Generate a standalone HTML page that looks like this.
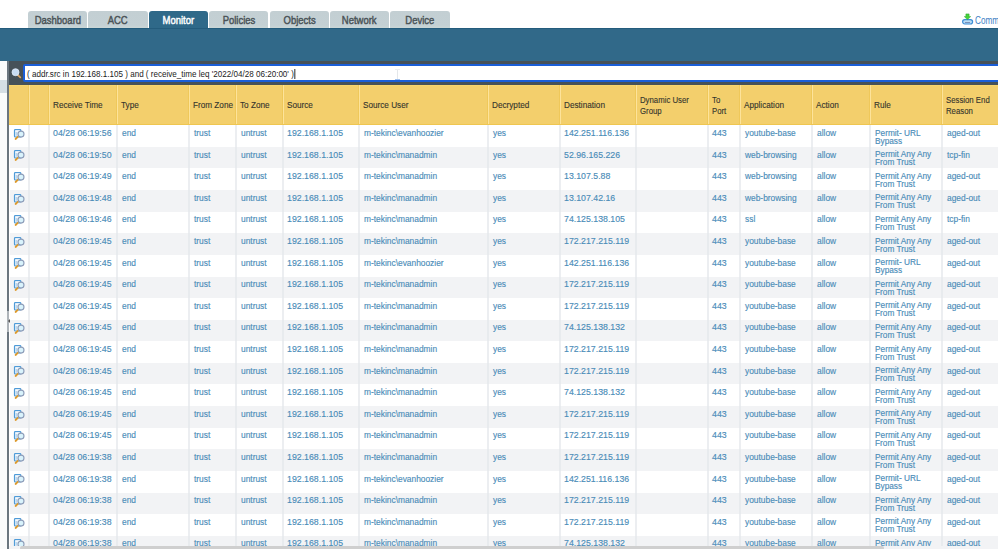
<!DOCTYPE html>
<html><head><meta charset="utf-8"><style>
*{box-sizing:border-box}
html,body{margin:0;padding:0}
body{width:998px;height:549px;overflow:hidden;position:relative;background:#fff;font-family:"Liberation Sans",sans-serif}
.tab{position:absolute;top:11px;height:17px;width:59.2px;background:linear-gradient(#c3cfd3 0%,#c4d0d4 82%,#cad6d6 100%);border-radius:3px 3px 0 0;color:#4a5357;font-weight:normal;-webkit-text-stroke:0.45px #4a5357;font-size:11px;line-height:19px;text-align:center;letter-spacing:0}
.tab span{display:inline-block;transform:scaleX(0.86);transform-origin:center}
.tab.on{background:#2f6989 !important;color:#fff;-webkit-text-stroke:0.45px #fff}
#band{position:absolute;left:0;top:28px;width:998px;height:33px;background:#316989;border-top:1px solid #245c7c}
#lp{position:absolute;left:0;top:61px;width:7px;height:488px;background:#fafbfb}
#lpsel{position:absolute;left:0;top:80px;width:7px;height:13px;background:#d5dee4}
#frame{position:absolute;left:7px;top:61px;width:991px;height:488px;background:#465158}
#lb{position:absolute;left:7px;top:61px;width:2px;height:488px;background:#6b767f}
#search{position:absolute;left:23px;top:64px;width:980px;height:18px;border:2px solid #1a5ed8;border-radius:2px;background:#fff;}
#stext{position:absolute;left:26.5px;top:67.5px;font-size:9.6px;line-height:12px;color:#222;white-space:nowrap;transform:scaleX(0.841);transform-origin:left top}
#tbl{position:absolute;left:9px;top:84.5px;width:989px;height:461.5px;background:#fff;overflow:hidden}
.hd{position:absolute;top:0;height:40.8px;background:#f3cf6c}
.hdl{position:absolute;top:0;height:40.8px;width:1px;background:#fde39a}
.hdd{position:absolute;top:0;height:40.8px;width:1px;background:#efc85a}
.ht{position:absolute;font-size:8.8px;color:#35352c;-webkit-text-stroke:0.12px #35352c;line-height:10.4px;white-space:nowrap;transform-origin:left top}
.row{position:absolute;left:1px;width:988px;height:21.6px}
.alt{background:#f2f3f5}
.vl{position:absolute;top:40.8px;height:430px;width:2px;background:#e4e7eb;opacity:0.7}
.t{position:absolute;font-size:9.8px;color:#4a8cb8;-webkit-text-stroke:0.15px #4a8cb8;line-height:8px;white-space:nowrap;transform:scaleX(0.855);transform-origin:left top}
.rt{position:absolute;font-size:9px;color:#4a8cb8;-webkit-text-stroke:0.15px #4a8cb8;line-height:8px;white-space:nowrap;transform:scaleX(0.92);transform-origin:left top}
.ic{position:absolute;left:4px;width:14px;height:14px}
#sb{position:absolute;left:20px;top:546px;width:864px;height:4px;background:#cfcfcf;border-radius:2px}
#commit{position:absolute;left:975px;top:14px;font-size:10.5px;line-height:12px;color:#3d80c4;white-space:nowrap;transform:scaleX(0.78);transform-origin:left top}
</style></head><body>

<div class="tab" style="left:28.0px"><span>Dashboard</span></div>
<div class="tab" style="left:88.4px"><span>ACC</span></div>
<div class="tab on" style="left:148.8px"><span>Monitor</span></div>
<div class="tab" style="left:209.2px"><span>Policies</span></div>
<div class="tab" style="left:269.6px"><span>Objects</span></div>
<div class="tab" style="left:330.0px"><span>Network</span></div>
<div class="tab" style="left:390.4px"><span>Device</span></div>
<svg style="position:absolute;left:961px;top:13px" width="13" height="13" viewBox="0 0 13 13"><rect x="1.6" y="6.6" width="10" height="4.4" rx="2.2" fill="#b9dcf4" stroke="#3d8ed6" stroke-width="1.2"/><rect x="4" y="9" width="5" height="1" fill="#7a90b8"/><path d="M4.9 0.9h3.2v2.7h1.6L6.5 6.6 3.3 3.6h1.6z" fill="#45d43a" stroke="#2aa02a" stroke-width="0.5"/></svg><div id="commit">Comm</div>
<div id="band"></div><div id="frame"></div><div id="lp"></div><div id="lpsel"></div><div id="lb"></div>
<svg style="position:absolute;left:10px;top:67px" width="12" height="12" viewBox="0 0 12 12"><line x1="7.6" y1="7.8" x2="10.3" y2="10.3" stroke="#dba463" stroke-width="1.7" stroke-linecap="round"/><circle cx="5.5" cy="5.2" r="3.5" fill="#c8dcf2" stroke="#e2eefa" stroke-width="0.8"/></svg>
<div id="search"></div><div id="stext">( addr.src in 192.168.1.105 ) and ( receive_time leq '2022/04/28 06:20:00' )<span style="display:inline-block;width:1px;height:10px;background:#000;vertical-align:-2px;margin-left:1px"></span></div>
<div style="position:absolute;left:397px;top:69px;width:1px;height:10px;background:#e4e7ea"></div><div style="position:absolute;left:395px;top:69px;width:5px;height:1px;background:#eceef0"></div><div style="position:absolute;left:395px;top:79px;width:5px;height:1px;background:#9fc0ee"></div>
<div id="tbl">
<div class="hd" style="left:0;width:989px"></div><div style="position:absolute;left:0;top:0;width:989px;height:1px;background:#f9d56c"></div>
<div class="hdd" style="left:19.0px"></div><div class="hdl" style="left:20.0px"></div>
<div class="hdd" style="left:39.0px"></div><div class="hdl" style="left:40.0px"></div>
<div class="hdd" style="left:107.0px"></div><div class="hdl" style="left:108.0px"></div>
<div class="hdd" style="left:179.0px"></div><div class="hdl" style="left:180.0px"></div>
<div class="hdd" style="left:226.0px"></div><div class="hdl" style="left:227.0px"></div>
<div class="hdd" style="left:273.0px"></div><div class="hdl" style="left:274.0px"></div>
<div class="hdd" style="left:349.0px"></div><div class="hdl" style="left:350.0px"></div>
<div class="hdd" style="left:478.0px"></div><div class="hdl" style="left:479.0px"></div>
<div class="hdd" style="left:550.0px"></div><div class="hdl" style="left:551.0px"></div>
<div class="hdd" style="left:626.0px"></div><div class="hdl" style="left:627.0px"></div>
<div class="hdd" style="left:698.0px"></div><div class="hdl" style="left:699.0px"></div>
<div class="hdd" style="left:730.0px"></div><div class="hdl" style="left:731.0px"></div>
<div class="hdd" style="left:802.0px"></div><div class="hdl" style="left:803.0px"></div>
<div class="hdd" style="left:860.0px"></div><div class="hdl" style="left:861.0px"></div>
<div class="hdd" style="left:932.0px"></div><div class="hdl" style="left:933.0px"></div>
<div style="position:absolute;left:0;top:39.8px;width:989px;height:1px;background:#efc650"></div>
<div class="row" style="top:40.80px"></div>
<div class="row alt" style="top:62.40px"></div>
<div class="row" style="top:84.00px"></div>
<div class="row alt" style="top:105.60px"></div>
<div class="row" style="top:127.20px"></div>
<div class="row alt" style="top:148.80px"></div>
<div class="row" style="top:170.40px"></div>
<div class="row alt" style="top:192.00px"></div>
<div class="row" style="top:213.60px"></div>
<div class="row alt" style="top:235.20px"></div>
<div class="row" style="top:256.80px"></div>
<div class="row alt" style="top:278.40px"></div>
<div class="row" style="top:300.00px"></div>
<div class="row alt" style="top:321.60px"></div>
<div class="row" style="top:343.20px"></div>
<div class="row alt" style="top:364.80px"></div>
<div class="row" style="top:386.40px"></div>
<div class="row alt" style="top:408.00px"></div>
<div class="row" style="top:429.60px"></div>
<div class="row alt" style="top:451.20px"></div>
<div class="vl" style="left:19.0px"></div>
<div class="vl" style="left:39.0px"></div>
<div class="vl" style="left:107.0px"></div>
<div class="vl" style="left:179.0px"></div>
<div class="vl" style="left:226.0px"></div>
<div class="vl" style="left:273.0px"></div>
<div class="vl" style="left:349.0px"></div>
<div class="vl" style="left:478.0px"></div>
<div class="vl" style="left:550.0px"></div>
<div class="vl" style="left:626.0px"></div>
<div class="vl" style="left:698.0px"></div>
<div class="vl" style="left:730.0px"></div>
<div class="vl" style="left:802.0px"></div>
<div class="vl" style="left:860.0px"></div>
<div class="vl" style="left:932.0px"></div>
<div class="ht" style="left:44.4px;top:15.7px;transform:scaleX(0.93)">Receive Time</div>
<div class="ht" style="left:112.4px;top:15.7px;transform:scaleX(0.93)">Type</div>
<div class="ht" style="left:184.4px;top:15.7px;transform:scaleX(0.93)">From Zone</div>
<div class="ht" style="left:231.4px;top:15.7px;transform:scaleX(0.93)">To Zone</div>
<div class="ht" style="left:278.4px;top:15.7px;transform:scaleX(0.93)">Source</div>
<div class="ht" style="left:354.4px;top:15.7px;transform:scaleX(0.93)">Source User</div>
<div class="ht" style="left:483.4px;top:15.7px;transform:scaleX(0.93)">Decrypted</div>
<div class="ht" style="left:555.4px;top:15.7px;transform:scaleX(0.93)">Destination</div>
<div class="ht" style="left:630.6px;top:10.6px;transform:scaleX(0.885)">Dynamic User<br>Group</div>
<div class="ht" style="left:702.6px;top:10.6px;transform:scaleX(0.885)">To<br>Port</div>
<div class="ht" style="left:735.4px;top:15.7px;transform:scaleX(0.93)">Application</div>
<div class="ht" style="left:807.4px;top:15.7px;transform:scaleX(0.93)">Action</div>
<div class="ht" style="left:865.4px;top:15.7px;transform:scaleX(0.93)">Rule</div>
<div class="ht" style="left:936.6px;top:10.6px;transform:scaleX(0.885)">Session End<br>Reason</div>
<svg class="ic" style="top:43.3px" width="14" height="14" viewBox="0 0 14 14"><rect x="1.5" y="1.6" width="6.3" height="7.4" rx="0.8" fill="#e6f1fa" stroke="#4f9bd8" stroke-width="1.2"/><line x1="2.4" y1="3" x2="7" y2="3" stroke="#fff" stroke-width="1"/><line x1="3.3" y1="4" x2="3.3" y2="7.6" stroke="#a9cdea" stroke-width="0.9"/><line x1="5" y1="8.7" x2="2.6" y2="11" stroke="#dd9a2c" stroke-width="1.8" stroke-linecap="round"/><circle cx="8" cy="6.1" r="3" fill="#d9f3fc" stroke="#8c9cb8" stroke-width="1.1"/></svg>
<div class="t" style="left:44.4px;top:44.4px;transform:scaleX(0.895)">04/28 06:19:56</div>
<div class="t" style="left:112.4px;top:44.4px;margin-left:0.9px">end</div>
<div class="t" style="left:184.4px;top:44.4px;margin-left:0.9px">trust</div>
<div class="t" style="left:231.4px;top:44.4px;margin-left:0.9px">untrust</div>
<div class="t" style="left:278.4px;top:44.4px;transform:scaleX(0.895)">192.168.1.105</div>
<div class="t" style="left:354.4px;top:44.4px;margin-left:0.9px">m-tekinc\evanhoozier</div>
<div class="t" style="left:483.4px;top:44.4px;margin-left:0.9px">yes</div>
<div class="t" style="left:555.4px;top:44.4px;transform:scaleX(0.895)">142.251.116.136</div>
<div class="t" style="left:703.4px;top:44.4px;transform:scaleX(0.895)">443</div>
<div class="t" style="left:735.4px;top:44.4px;margin-left:0.9px">youtube-base</div>
<div class="t" style="left:807.4px;top:44.4px;margin-left:0.9px">allow</div>
<div class="rt" style="left:865.4px;top:44.1px;margin-left:0.6px">Permit- URL<br>Bypass</div>
<div class="t" style="left:937.4px;top:44.4px;margin-left:0.9px">aged-out</div>
<svg class="ic" style="top:64.9px" width="14" height="14" viewBox="0 0 14 14"><rect x="1.5" y="1.6" width="6.3" height="7.4" rx="0.8" fill="#e6f1fa" stroke="#4f9bd8" stroke-width="1.2"/><line x1="2.4" y1="3" x2="7" y2="3" stroke="#fff" stroke-width="1"/><line x1="3.3" y1="4" x2="3.3" y2="7.6" stroke="#a9cdea" stroke-width="0.9"/><line x1="5" y1="8.7" x2="2.6" y2="11" stroke="#dd9a2c" stroke-width="1.8" stroke-linecap="round"/><circle cx="8" cy="6.1" r="3" fill="#d9f3fc" stroke="#8c9cb8" stroke-width="1.1"/></svg>
<div class="t" style="left:44.4px;top:66.0px;transform:scaleX(0.895)">04/28 06:19:50</div>
<div class="t" style="left:112.4px;top:66.0px;margin-left:0.9px">end</div>
<div class="t" style="left:184.4px;top:66.0px;margin-left:0.9px">trust</div>
<div class="t" style="left:231.4px;top:66.0px;margin-left:0.9px">untrust</div>
<div class="t" style="left:278.4px;top:66.0px;transform:scaleX(0.895)">192.168.1.105</div>
<div class="t" style="left:354.4px;top:66.0px;margin-left:0.9px">m-tekinc\manadmin</div>
<div class="t" style="left:483.4px;top:66.0px;margin-left:0.9px">yes</div>
<div class="t" style="left:555.4px;top:66.0px;transform:scaleX(0.895)">52.96.165.226</div>
<div class="t" style="left:703.4px;top:66.0px;transform:scaleX(0.895)">443</div>
<div class="t" style="left:735.4px;top:66.0px;margin-left:0.9px">web-browsing</div>
<div class="t" style="left:807.4px;top:66.0px;margin-left:0.9px">allow</div>
<div class="rt" style="left:865.4px;top:65.7px;margin-left:0.6px">Permit Any Any<br>From Trust</div>
<div class="t" style="left:937.4px;top:66.0px;margin-left:0.9px">tcp-fin</div>
<svg class="ic" style="top:86.5px" width="14" height="14" viewBox="0 0 14 14"><rect x="1.5" y="1.6" width="6.3" height="7.4" rx="0.8" fill="#e6f1fa" stroke="#4f9bd8" stroke-width="1.2"/><line x1="2.4" y1="3" x2="7" y2="3" stroke="#fff" stroke-width="1"/><line x1="3.3" y1="4" x2="3.3" y2="7.6" stroke="#a9cdea" stroke-width="0.9"/><line x1="5" y1="8.7" x2="2.6" y2="11" stroke="#dd9a2c" stroke-width="1.8" stroke-linecap="round"/><circle cx="8" cy="6.1" r="3" fill="#d9f3fc" stroke="#8c9cb8" stroke-width="1.1"/></svg>
<div class="t" style="left:44.4px;top:87.6px;transform:scaleX(0.895)">04/28 06:19:49</div>
<div class="t" style="left:112.4px;top:87.6px;margin-left:0.9px">end</div>
<div class="t" style="left:184.4px;top:87.6px;margin-left:0.9px">trust</div>
<div class="t" style="left:231.4px;top:87.6px;margin-left:0.9px">untrust</div>
<div class="t" style="left:278.4px;top:87.6px;transform:scaleX(0.895)">192.168.1.105</div>
<div class="t" style="left:354.4px;top:87.6px;margin-left:0.9px">m-tekinc\manadmin</div>
<div class="t" style="left:483.4px;top:87.6px;margin-left:0.9px">yes</div>
<div class="t" style="left:555.4px;top:87.6px;transform:scaleX(0.895)">13.107.5.88</div>
<div class="t" style="left:703.4px;top:87.6px;transform:scaleX(0.895)">443</div>
<div class="t" style="left:735.4px;top:87.6px;margin-left:0.9px">web-browsing</div>
<div class="t" style="left:807.4px;top:87.6px;margin-left:0.9px">allow</div>
<div class="rt" style="left:865.4px;top:87.3px;margin-left:0.6px">Permit Any Any<br>From Trust</div>
<div class="t" style="left:937.4px;top:87.6px;margin-left:0.9px">aged-out</div>
<svg class="ic" style="top:108.1px" width="14" height="14" viewBox="0 0 14 14"><rect x="1.5" y="1.6" width="6.3" height="7.4" rx="0.8" fill="#e6f1fa" stroke="#4f9bd8" stroke-width="1.2"/><line x1="2.4" y1="3" x2="7" y2="3" stroke="#fff" stroke-width="1"/><line x1="3.3" y1="4" x2="3.3" y2="7.6" stroke="#a9cdea" stroke-width="0.9"/><line x1="5" y1="8.7" x2="2.6" y2="11" stroke="#dd9a2c" stroke-width="1.8" stroke-linecap="round"/><circle cx="8" cy="6.1" r="3" fill="#d9f3fc" stroke="#8c9cb8" stroke-width="1.1"/></svg>
<div class="t" style="left:44.4px;top:109.2px;transform:scaleX(0.895)">04/28 06:19:48</div>
<div class="t" style="left:112.4px;top:109.2px;margin-left:0.9px">end</div>
<div class="t" style="left:184.4px;top:109.2px;margin-left:0.9px">trust</div>
<div class="t" style="left:231.4px;top:109.2px;margin-left:0.9px">untrust</div>
<div class="t" style="left:278.4px;top:109.2px;transform:scaleX(0.895)">192.168.1.105</div>
<div class="t" style="left:354.4px;top:109.2px;margin-left:0.9px">m-tekinc\manadmin</div>
<div class="t" style="left:483.4px;top:109.2px;margin-left:0.9px">yes</div>
<div class="t" style="left:555.4px;top:109.2px;transform:scaleX(0.895)">13.107.42.16</div>
<div class="t" style="left:703.4px;top:109.2px;transform:scaleX(0.895)">443</div>
<div class="t" style="left:735.4px;top:109.2px;margin-left:0.9px">web-browsing</div>
<div class="t" style="left:807.4px;top:109.2px;margin-left:0.9px">allow</div>
<div class="rt" style="left:865.4px;top:108.9px;margin-left:0.6px">Permit Any Any<br>From Trust</div>
<div class="t" style="left:937.4px;top:109.2px;margin-left:0.9px">aged-out</div>
<svg class="ic" style="top:129.7px" width="14" height="14" viewBox="0 0 14 14"><rect x="1.5" y="1.6" width="6.3" height="7.4" rx="0.8" fill="#e6f1fa" stroke="#4f9bd8" stroke-width="1.2"/><line x1="2.4" y1="3" x2="7" y2="3" stroke="#fff" stroke-width="1"/><line x1="3.3" y1="4" x2="3.3" y2="7.6" stroke="#a9cdea" stroke-width="0.9"/><line x1="5" y1="8.7" x2="2.6" y2="11" stroke="#dd9a2c" stroke-width="1.8" stroke-linecap="round"/><circle cx="8" cy="6.1" r="3" fill="#d9f3fc" stroke="#8c9cb8" stroke-width="1.1"/></svg>
<div class="t" style="left:44.4px;top:130.8px;transform:scaleX(0.895)">04/28 06:19:46</div>
<div class="t" style="left:112.4px;top:130.8px;margin-left:0.9px">end</div>
<div class="t" style="left:184.4px;top:130.8px;margin-left:0.9px">trust</div>
<div class="t" style="left:231.4px;top:130.8px;margin-left:0.9px">untrust</div>
<div class="t" style="left:278.4px;top:130.8px;transform:scaleX(0.895)">192.168.1.105</div>
<div class="t" style="left:354.4px;top:130.8px;margin-left:0.9px">m-tekinc\manadmin</div>
<div class="t" style="left:483.4px;top:130.8px;margin-left:0.9px">yes</div>
<div class="t" style="left:555.4px;top:130.8px;transform:scaleX(0.895)">74.125.138.105</div>
<div class="t" style="left:703.4px;top:130.8px;transform:scaleX(0.895)">443</div>
<div class="t" style="left:735.4px;top:130.8px;margin-left:0.9px">ssl</div>
<div class="t" style="left:807.4px;top:130.8px;margin-left:0.9px">allow</div>
<div class="rt" style="left:865.4px;top:130.5px;margin-left:0.6px">Permit Any Any<br>From Trust</div>
<div class="t" style="left:937.4px;top:130.8px;margin-left:0.9px">tcp-fin</div>
<svg class="ic" style="top:151.3px" width="14" height="14" viewBox="0 0 14 14"><rect x="1.5" y="1.6" width="6.3" height="7.4" rx="0.8" fill="#e6f1fa" stroke="#4f9bd8" stroke-width="1.2"/><line x1="2.4" y1="3" x2="7" y2="3" stroke="#fff" stroke-width="1"/><line x1="3.3" y1="4" x2="3.3" y2="7.6" stroke="#a9cdea" stroke-width="0.9"/><line x1="5" y1="8.7" x2="2.6" y2="11" stroke="#dd9a2c" stroke-width="1.8" stroke-linecap="round"/><circle cx="8" cy="6.1" r="3" fill="#d9f3fc" stroke="#8c9cb8" stroke-width="1.1"/></svg>
<div class="t" style="left:44.4px;top:152.4px;transform:scaleX(0.895)">04/28 06:19:45</div>
<div class="t" style="left:112.4px;top:152.4px;margin-left:0.9px">end</div>
<div class="t" style="left:184.4px;top:152.4px;margin-left:0.9px">trust</div>
<div class="t" style="left:231.4px;top:152.4px;margin-left:0.9px">untrust</div>
<div class="t" style="left:278.4px;top:152.4px;transform:scaleX(0.895)">192.168.1.105</div>
<div class="t" style="left:354.4px;top:152.4px;margin-left:0.9px">m-tekinc\manadmin</div>
<div class="t" style="left:483.4px;top:152.4px;margin-left:0.9px">yes</div>
<div class="t" style="left:555.4px;top:152.4px;transform:scaleX(0.895)">172.217.215.119</div>
<div class="t" style="left:703.4px;top:152.4px;transform:scaleX(0.895)">443</div>
<div class="t" style="left:735.4px;top:152.4px;margin-left:0.9px">youtube-base</div>
<div class="t" style="left:807.4px;top:152.4px;margin-left:0.9px">allow</div>
<div class="rt" style="left:865.4px;top:152.1px;margin-left:0.6px">Permit Any Any<br>From Trust</div>
<div class="t" style="left:937.4px;top:152.4px;margin-left:0.9px">aged-out</div>
<svg class="ic" style="top:172.9px" width="14" height="14" viewBox="0 0 14 14"><rect x="1.5" y="1.6" width="6.3" height="7.4" rx="0.8" fill="#e6f1fa" stroke="#4f9bd8" stroke-width="1.2"/><line x1="2.4" y1="3" x2="7" y2="3" stroke="#fff" stroke-width="1"/><line x1="3.3" y1="4" x2="3.3" y2="7.6" stroke="#a9cdea" stroke-width="0.9"/><line x1="5" y1="8.7" x2="2.6" y2="11" stroke="#dd9a2c" stroke-width="1.8" stroke-linecap="round"/><circle cx="8" cy="6.1" r="3" fill="#d9f3fc" stroke="#8c9cb8" stroke-width="1.1"/></svg>
<div class="t" style="left:44.4px;top:174.0px;transform:scaleX(0.895)">04/28 06:19:45</div>
<div class="t" style="left:112.4px;top:174.0px;margin-left:0.9px">end</div>
<div class="t" style="left:184.4px;top:174.0px;margin-left:0.9px">trust</div>
<div class="t" style="left:231.4px;top:174.0px;margin-left:0.9px">untrust</div>
<div class="t" style="left:278.4px;top:174.0px;transform:scaleX(0.895)">192.168.1.105</div>
<div class="t" style="left:354.4px;top:174.0px;margin-left:0.9px">m-tekinc\evanhoozier</div>
<div class="t" style="left:483.4px;top:174.0px;margin-left:0.9px">yes</div>
<div class="t" style="left:555.4px;top:174.0px;transform:scaleX(0.895)">142.251.116.136</div>
<div class="t" style="left:703.4px;top:174.0px;transform:scaleX(0.895)">443</div>
<div class="t" style="left:735.4px;top:174.0px;margin-left:0.9px">youtube-base</div>
<div class="t" style="left:807.4px;top:174.0px;margin-left:0.9px">allow</div>
<div class="rt" style="left:865.4px;top:173.7px;margin-left:0.6px">Permit- URL<br>Bypass</div>
<div class="t" style="left:937.4px;top:174.0px;margin-left:0.9px">aged-out</div>
<svg class="ic" style="top:194.5px" width="14" height="14" viewBox="0 0 14 14"><rect x="1.5" y="1.6" width="6.3" height="7.4" rx="0.8" fill="#e6f1fa" stroke="#4f9bd8" stroke-width="1.2"/><line x1="2.4" y1="3" x2="7" y2="3" stroke="#fff" stroke-width="1"/><line x1="3.3" y1="4" x2="3.3" y2="7.6" stroke="#a9cdea" stroke-width="0.9"/><line x1="5" y1="8.7" x2="2.6" y2="11" stroke="#dd9a2c" stroke-width="1.8" stroke-linecap="round"/><circle cx="8" cy="6.1" r="3" fill="#d9f3fc" stroke="#8c9cb8" stroke-width="1.1"/></svg>
<div class="t" style="left:44.4px;top:195.6px;transform:scaleX(0.895)">04/28 06:19:45</div>
<div class="t" style="left:112.4px;top:195.6px;margin-left:0.9px">end</div>
<div class="t" style="left:184.4px;top:195.6px;margin-left:0.9px">trust</div>
<div class="t" style="left:231.4px;top:195.6px;margin-left:0.9px">untrust</div>
<div class="t" style="left:278.4px;top:195.6px;transform:scaleX(0.895)">192.168.1.105</div>
<div class="t" style="left:354.4px;top:195.6px;margin-left:0.9px">m-tekinc\manadmin</div>
<div class="t" style="left:483.4px;top:195.6px;margin-left:0.9px">yes</div>
<div class="t" style="left:555.4px;top:195.6px;transform:scaleX(0.895)">172.217.215.119</div>
<div class="t" style="left:703.4px;top:195.6px;transform:scaleX(0.895)">443</div>
<div class="t" style="left:735.4px;top:195.6px;margin-left:0.9px">youtube-base</div>
<div class="t" style="left:807.4px;top:195.6px;margin-left:0.9px">allow</div>
<div class="rt" style="left:865.4px;top:195.3px;margin-left:0.6px">Permit Any Any<br>From Trust</div>
<div class="t" style="left:937.4px;top:195.6px;margin-left:0.9px">aged-out</div>
<svg class="ic" style="top:216.1px" width="14" height="14" viewBox="0 0 14 14"><rect x="1.5" y="1.6" width="6.3" height="7.4" rx="0.8" fill="#e6f1fa" stroke="#4f9bd8" stroke-width="1.2"/><line x1="2.4" y1="3" x2="7" y2="3" stroke="#fff" stroke-width="1"/><line x1="3.3" y1="4" x2="3.3" y2="7.6" stroke="#a9cdea" stroke-width="0.9"/><line x1="5" y1="8.7" x2="2.6" y2="11" stroke="#dd9a2c" stroke-width="1.8" stroke-linecap="round"/><circle cx="8" cy="6.1" r="3" fill="#d9f3fc" stroke="#8c9cb8" stroke-width="1.1"/></svg>
<div class="t" style="left:44.4px;top:217.2px;transform:scaleX(0.895)">04/28 06:19:45</div>
<div class="t" style="left:112.4px;top:217.2px;margin-left:0.9px">end</div>
<div class="t" style="left:184.4px;top:217.2px;margin-left:0.9px">trust</div>
<div class="t" style="left:231.4px;top:217.2px;margin-left:0.9px">untrust</div>
<div class="t" style="left:278.4px;top:217.2px;transform:scaleX(0.895)">192.168.1.105</div>
<div class="t" style="left:354.4px;top:217.2px;margin-left:0.9px">m-tekinc\manadmin</div>
<div class="t" style="left:483.4px;top:217.2px;margin-left:0.9px">yes</div>
<div class="t" style="left:555.4px;top:217.2px;transform:scaleX(0.895)">172.217.215.119</div>
<div class="t" style="left:703.4px;top:217.2px;transform:scaleX(0.895)">443</div>
<div class="t" style="left:735.4px;top:217.2px;margin-left:0.9px">youtube-base</div>
<div class="t" style="left:807.4px;top:217.2px;margin-left:0.9px">allow</div>
<div class="rt" style="left:865.4px;top:216.9px;margin-left:0.6px">Permit Any Any<br>From Trust</div>
<div class="t" style="left:937.4px;top:217.2px;margin-left:0.9px">aged-out</div>
<svg class="ic" style="top:237.7px" width="14" height="14" viewBox="0 0 14 14"><rect x="1.5" y="1.6" width="6.3" height="7.4" rx="0.8" fill="#e6f1fa" stroke="#4f9bd8" stroke-width="1.2"/><line x1="2.4" y1="3" x2="7" y2="3" stroke="#fff" stroke-width="1"/><line x1="3.3" y1="4" x2="3.3" y2="7.6" stroke="#a9cdea" stroke-width="0.9"/><line x1="5" y1="8.7" x2="2.6" y2="11" stroke="#dd9a2c" stroke-width="1.8" stroke-linecap="round"/><circle cx="8" cy="6.1" r="3" fill="#d9f3fc" stroke="#8c9cb8" stroke-width="1.1"/></svg>
<div class="t" style="left:44.4px;top:238.8px;transform:scaleX(0.895)">04/28 06:19:45</div>
<div class="t" style="left:112.4px;top:238.8px;margin-left:0.9px">end</div>
<div class="t" style="left:184.4px;top:238.8px;margin-left:0.9px">trust</div>
<div class="t" style="left:231.4px;top:238.8px;margin-left:0.9px">untrust</div>
<div class="t" style="left:278.4px;top:238.8px;transform:scaleX(0.895)">192.168.1.105</div>
<div class="t" style="left:354.4px;top:238.8px;margin-left:0.9px">m-tekinc\manadmin</div>
<div class="t" style="left:483.4px;top:238.8px;margin-left:0.9px">yes</div>
<div class="t" style="left:555.4px;top:238.8px;transform:scaleX(0.895)">74.125.138.132</div>
<div class="t" style="left:703.4px;top:238.8px;transform:scaleX(0.895)">443</div>
<div class="t" style="left:735.4px;top:238.8px;margin-left:0.9px">youtube-base</div>
<div class="t" style="left:807.4px;top:238.8px;margin-left:0.9px">allow</div>
<div class="rt" style="left:865.4px;top:238.5px;margin-left:0.6px">Permit Any Any<br>From Trust</div>
<div class="t" style="left:937.4px;top:238.8px;margin-left:0.9px">aged-out</div>
<svg class="ic" style="top:259.3px" width="14" height="14" viewBox="0 0 14 14"><rect x="1.5" y="1.6" width="6.3" height="7.4" rx="0.8" fill="#e6f1fa" stroke="#4f9bd8" stroke-width="1.2"/><line x1="2.4" y1="3" x2="7" y2="3" stroke="#fff" stroke-width="1"/><line x1="3.3" y1="4" x2="3.3" y2="7.6" stroke="#a9cdea" stroke-width="0.9"/><line x1="5" y1="8.7" x2="2.6" y2="11" stroke="#dd9a2c" stroke-width="1.8" stroke-linecap="round"/><circle cx="8" cy="6.1" r="3" fill="#d9f3fc" stroke="#8c9cb8" stroke-width="1.1"/></svg>
<div class="t" style="left:44.4px;top:260.4px;transform:scaleX(0.895)">04/28 06:19:45</div>
<div class="t" style="left:112.4px;top:260.4px;margin-left:0.9px">end</div>
<div class="t" style="left:184.4px;top:260.4px;margin-left:0.9px">trust</div>
<div class="t" style="left:231.4px;top:260.4px;margin-left:0.9px">untrust</div>
<div class="t" style="left:278.4px;top:260.4px;transform:scaleX(0.895)">192.168.1.105</div>
<div class="t" style="left:354.4px;top:260.4px;margin-left:0.9px">m-tekinc\manadmin</div>
<div class="t" style="left:483.4px;top:260.4px;margin-left:0.9px">yes</div>
<div class="t" style="left:555.4px;top:260.4px;transform:scaleX(0.895)">172.217.215.119</div>
<div class="t" style="left:703.4px;top:260.4px;transform:scaleX(0.895)">443</div>
<div class="t" style="left:735.4px;top:260.4px;margin-left:0.9px">youtube-base</div>
<div class="t" style="left:807.4px;top:260.4px;margin-left:0.9px">allow</div>
<div class="rt" style="left:865.4px;top:260.1px;margin-left:0.6px">Permit Any Any<br>From Trust</div>
<div class="t" style="left:937.4px;top:260.4px;margin-left:0.9px">aged-out</div>
<svg class="ic" style="top:280.9px" width="14" height="14" viewBox="0 0 14 14"><rect x="1.5" y="1.6" width="6.3" height="7.4" rx="0.8" fill="#e6f1fa" stroke="#4f9bd8" stroke-width="1.2"/><line x1="2.4" y1="3" x2="7" y2="3" stroke="#fff" stroke-width="1"/><line x1="3.3" y1="4" x2="3.3" y2="7.6" stroke="#a9cdea" stroke-width="0.9"/><line x1="5" y1="8.7" x2="2.6" y2="11" stroke="#dd9a2c" stroke-width="1.8" stroke-linecap="round"/><circle cx="8" cy="6.1" r="3" fill="#d9f3fc" stroke="#8c9cb8" stroke-width="1.1"/></svg>
<div class="t" style="left:44.4px;top:282.0px;transform:scaleX(0.895)">04/28 06:19:45</div>
<div class="t" style="left:112.4px;top:282.0px;margin-left:0.9px">end</div>
<div class="t" style="left:184.4px;top:282.0px;margin-left:0.9px">trust</div>
<div class="t" style="left:231.4px;top:282.0px;margin-left:0.9px">untrust</div>
<div class="t" style="left:278.4px;top:282.0px;transform:scaleX(0.895)">192.168.1.105</div>
<div class="t" style="left:354.4px;top:282.0px;margin-left:0.9px">m-tekinc\manadmin</div>
<div class="t" style="left:483.4px;top:282.0px;margin-left:0.9px">yes</div>
<div class="t" style="left:555.4px;top:282.0px;transform:scaleX(0.895)">172.217.215.119</div>
<div class="t" style="left:703.4px;top:282.0px;transform:scaleX(0.895)">443</div>
<div class="t" style="left:735.4px;top:282.0px;margin-left:0.9px">youtube-base</div>
<div class="t" style="left:807.4px;top:282.0px;margin-left:0.9px">allow</div>
<div class="rt" style="left:865.4px;top:281.7px;margin-left:0.6px">Permit Any Any<br>From Trust</div>
<div class="t" style="left:937.4px;top:282.0px;margin-left:0.9px">aged-out</div>
<svg class="ic" style="top:302.5px" width="14" height="14" viewBox="0 0 14 14"><rect x="1.5" y="1.6" width="6.3" height="7.4" rx="0.8" fill="#e6f1fa" stroke="#4f9bd8" stroke-width="1.2"/><line x1="2.4" y1="3" x2="7" y2="3" stroke="#fff" stroke-width="1"/><line x1="3.3" y1="4" x2="3.3" y2="7.6" stroke="#a9cdea" stroke-width="0.9"/><line x1="5" y1="8.7" x2="2.6" y2="11" stroke="#dd9a2c" stroke-width="1.8" stroke-linecap="round"/><circle cx="8" cy="6.1" r="3" fill="#d9f3fc" stroke="#8c9cb8" stroke-width="1.1"/></svg>
<div class="t" style="left:44.4px;top:303.6px;transform:scaleX(0.895)">04/28 06:19:45</div>
<div class="t" style="left:112.4px;top:303.6px;margin-left:0.9px">end</div>
<div class="t" style="left:184.4px;top:303.6px;margin-left:0.9px">trust</div>
<div class="t" style="left:231.4px;top:303.6px;margin-left:0.9px">untrust</div>
<div class="t" style="left:278.4px;top:303.6px;transform:scaleX(0.895)">192.168.1.105</div>
<div class="t" style="left:354.4px;top:303.6px;margin-left:0.9px">m-tekinc\manadmin</div>
<div class="t" style="left:483.4px;top:303.6px;margin-left:0.9px">yes</div>
<div class="t" style="left:555.4px;top:303.6px;transform:scaleX(0.895)">74.125.138.132</div>
<div class="t" style="left:703.4px;top:303.6px;transform:scaleX(0.895)">443</div>
<div class="t" style="left:735.4px;top:303.6px;margin-left:0.9px">youtube-base</div>
<div class="t" style="left:807.4px;top:303.6px;margin-left:0.9px">allow</div>
<div class="rt" style="left:865.4px;top:303.3px;margin-left:0.6px">Permit Any Any<br>From Trust</div>
<div class="t" style="left:937.4px;top:303.6px;margin-left:0.9px">aged-out</div>
<svg class="ic" style="top:324.1px" width="14" height="14" viewBox="0 0 14 14"><rect x="1.5" y="1.6" width="6.3" height="7.4" rx="0.8" fill="#e6f1fa" stroke="#4f9bd8" stroke-width="1.2"/><line x1="2.4" y1="3" x2="7" y2="3" stroke="#fff" stroke-width="1"/><line x1="3.3" y1="4" x2="3.3" y2="7.6" stroke="#a9cdea" stroke-width="0.9"/><line x1="5" y1="8.7" x2="2.6" y2="11" stroke="#dd9a2c" stroke-width="1.8" stroke-linecap="round"/><circle cx="8" cy="6.1" r="3" fill="#d9f3fc" stroke="#8c9cb8" stroke-width="1.1"/></svg>
<div class="t" style="left:44.4px;top:325.2px;transform:scaleX(0.895)">04/28 06:19:45</div>
<div class="t" style="left:112.4px;top:325.2px;margin-left:0.9px">end</div>
<div class="t" style="left:184.4px;top:325.2px;margin-left:0.9px">trust</div>
<div class="t" style="left:231.4px;top:325.2px;margin-left:0.9px">untrust</div>
<div class="t" style="left:278.4px;top:325.2px;transform:scaleX(0.895)">192.168.1.105</div>
<div class="t" style="left:354.4px;top:325.2px;margin-left:0.9px">m-tekinc\manadmin</div>
<div class="t" style="left:483.4px;top:325.2px;margin-left:0.9px">yes</div>
<div class="t" style="left:555.4px;top:325.2px;transform:scaleX(0.895)">172.217.215.119</div>
<div class="t" style="left:703.4px;top:325.2px;transform:scaleX(0.895)">443</div>
<div class="t" style="left:735.4px;top:325.2px;margin-left:0.9px">youtube-base</div>
<div class="t" style="left:807.4px;top:325.2px;margin-left:0.9px">allow</div>
<div class="rt" style="left:865.4px;top:324.9px;margin-left:0.6px">Permit Any Any<br>From Trust</div>
<div class="t" style="left:937.4px;top:325.2px;margin-left:0.9px">aged-out</div>
<svg class="ic" style="top:345.7px" width="14" height="14" viewBox="0 0 14 14"><rect x="1.5" y="1.6" width="6.3" height="7.4" rx="0.8" fill="#e6f1fa" stroke="#4f9bd8" stroke-width="1.2"/><line x1="2.4" y1="3" x2="7" y2="3" stroke="#fff" stroke-width="1"/><line x1="3.3" y1="4" x2="3.3" y2="7.6" stroke="#a9cdea" stroke-width="0.9"/><line x1="5" y1="8.7" x2="2.6" y2="11" stroke="#dd9a2c" stroke-width="1.8" stroke-linecap="round"/><circle cx="8" cy="6.1" r="3" fill="#d9f3fc" stroke="#8c9cb8" stroke-width="1.1"/></svg>
<div class="t" style="left:44.4px;top:346.8px;transform:scaleX(0.895)">04/28 06:19:45</div>
<div class="t" style="left:112.4px;top:346.8px;margin-left:0.9px">end</div>
<div class="t" style="left:184.4px;top:346.8px;margin-left:0.9px">trust</div>
<div class="t" style="left:231.4px;top:346.8px;margin-left:0.9px">untrust</div>
<div class="t" style="left:278.4px;top:346.8px;transform:scaleX(0.895)">192.168.1.105</div>
<div class="t" style="left:354.4px;top:346.8px;margin-left:0.9px">m-tekinc\manadmin</div>
<div class="t" style="left:483.4px;top:346.8px;margin-left:0.9px">yes</div>
<div class="t" style="left:555.4px;top:346.8px;transform:scaleX(0.895)">172.217.215.119</div>
<div class="t" style="left:703.4px;top:346.8px;transform:scaleX(0.895)">443</div>
<div class="t" style="left:735.4px;top:346.8px;margin-left:0.9px">youtube-base</div>
<div class="t" style="left:807.4px;top:346.8px;margin-left:0.9px">allow</div>
<div class="rt" style="left:865.4px;top:346.5px;margin-left:0.6px">Permit Any Any<br>From Trust</div>
<div class="t" style="left:937.4px;top:346.8px;margin-left:0.9px">aged-out</div>
<svg class="ic" style="top:367.3px" width="14" height="14" viewBox="0 0 14 14"><rect x="1.5" y="1.6" width="6.3" height="7.4" rx="0.8" fill="#e6f1fa" stroke="#4f9bd8" stroke-width="1.2"/><line x1="2.4" y1="3" x2="7" y2="3" stroke="#fff" stroke-width="1"/><line x1="3.3" y1="4" x2="3.3" y2="7.6" stroke="#a9cdea" stroke-width="0.9"/><line x1="5" y1="8.7" x2="2.6" y2="11" stroke="#dd9a2c" stroke-width="1.8" stroke-linecap="round"/><circle cx="8" cy="6.1" r="3" fill="#d9f3fc" stroke="#8c9cb8" stroke-width="1.1"/></svg>
<div class="t" style="left:44.4px;top:368.4px;transform:scaleX(0.895)">04/28 06:19:38</div>
<div class="t" style="left:112.4px;top:368.4px;margin-left:0.9px">end</div>
<div class="t" style="left:184.4px;top:368.4px;margin-left:0.9px">trust</div>
<div class="t" style="left:231.4px;top:368.4px;margin-left:0.9px">untrust</div>
<div class="t" style="left:278.4px;top:368.4px;transform:scaleX(0.895)">192.168.1.105</div>
<div class="t" style="left:354.4px;top:368.4px;margin-left:0.9px">m-tekinc\manadmin</div>
<div class="t" style="left:483.4px;top:368.4px;margin-left:0.9px">yes</div>
<div class="t" style="left:555.4px;top:368.4px;transform:scaleX(0.895)">172.217.215.119</div>
<div class="t" style="left:703.4px;top:368.4px;transform:scaleX(0.895)">443</div>
<div class="t" style="left:735.4px;top:368.4px;margin-left:0.9px">youtube-base</div>
<div class="t" style="left:807.4px;top:368.4px;margin-left:0.9px">allow</div>
<div class="rt" style="left:865.4px;top:368.1px;margin-left:0.6px">Permit Any Any<br>From Trust</div>
<div class="t" style="left:937.4px;top:368.4px;margin-left:0.9px">aged-out</div>
<svg class="ic" style="top:388.9px" width="14" height="14" viewBox="0 0 14 14"><rect x="1.5" y="1.6" width="6.3" height="7.4" rx="0.8" fill="#e6f1fa" stroke="#4f9bd8" stroke-width="1.2"/><line x1="2.4" y1="3" x2="7" y2="3" stroke="#fff" stroke-width="1"/><line x1="3.3" y1="4" x2="3.3" y2="7.6" stroke="#a9cdea" stroke-width="0.9"/><line x1="5" y1="8.7" x2="2.6" y2="11" stroke="#dd9a2c" stroke-width="1.8" stroke-linecap="round"/><circle cx="8" cy="6.1" r="3" fill="#d9f3fc" stroke="#8c9cb8" stroke-width="1.1"/></svg>
<div class="t" style="left:44.4px;top:390.0px;transform:scaleX(0.895)">04/28 06:19:38</div>
<div class="t" style="left:112.4px;top:390.0px;margin-left:0.9px">end</div>
<div class="t" style="left:184.4px;top:390.0px;margin-left:0.9px">trust</div>
<div class="t" style="left:231.4px;top:390.0px;margin-left:0.9px">untrust</div>
<div class="t" style="left:278.4px;top:390.0px;transform:scaleX(0.895)">192.168.1.105</div>
<div class="t" style="left:354.4px;top:390.0px;margin-left:0.9px">m-tekinc\evanhoozier</div>
<div class="t" style="left:483.4px;top:390.0px;margin-left:0.9px">yes</div>
<div class="t" style="left:555.4px;top:390.0px;transform:scaleX(0.895)">142.251.116.136</div>
<div class="t" style="left:703.4px;top:390.0px;transform:scaleX(0.895)">443</div>
<div class="t" style="left:735.4px;top:390.0px;margin-left:0.9px">youtube-base</div>
<div class="t" style="left:807.4px;top:390.0px;margin-left:0.9px">allow</div>
<div class="rt" style="left:865.4px;top:389.7px;margin-left:0.6px">Permit- URL<br>Bypass</div>
<div class="t" style="left:937.4px;top:390.0px;margin-left:0.9px">aged-out</div>
<svg class="ic" style="top:410.5px" width="14" height="14" viewBox="0 0 14 14"><rect x="1.5" y="1.6" width="6.3" height="7.4" rx="0.8" fill="#e6f1fa" stroke="#4f9bd8" stroke-width="1.2"/><line x1="2.4" y1="3" x2="7" y2="3" stroke="#fff" stroke-width="1"/><line x1="3.3" y1="4" x2="3.3" y2="7.6" stroke="#a9cdea" stroke-width="0.9"/><line x1="5" y1="8.7" x2="2.6" y2="11" stroke="#dd9a2c" stroke-width="1.8" stroke-linecap="round"/><circle cx="8" cy="6.1" r="3" fill="#d9f3fc" stroke="#8c9cb8" stroke-width="1.1"/></svg>
<div class="t" style="left:44.4px;top:411.6px;transform:scaleX(0.895)">04/28 06:19:38</div>
<div class="t" style="left:112.4px;top:411.6px;margin-left:0.9px">end</div>
<div class="t" style="left:184.4px;top:411.6px;margin-left:0.9px">trust</div>
<div class="t" style="left:231.4px;top:411.6px;margin-left:0.9px">untrust</div>
<div class="t" style="left:278.4px;top:411.6px;transform:scaleX(0.895)">192.168.1.105</div>
<div class="t" style="left:354.4px;top:411.6px;margin-left:0.9px">m-tekinc\manadmin</div>
<div class="t" style="left:483.4px;top:411.6px;margin-left:0.9px">yes</div>
<div class="t" style="left:555.4px;top:411.6px;transform:scaleX(0.895)">172.217.215.119</div>
<div class="t" style="left:703.4px;top:411.6px;transform:scaleX(0.895)">443</div>
<div class="t" style="left:735.4px;top:411.6px;margin-left:0.9px">youtube-base</div>
<div class="t" style="left:807.4px;top:411.6px;margin-left:0.9px">allow</div>
<div class="rt" style="left:865.4px;top:411.3px;margin-left:0.6px">Permit Any Any<br>From Trust</div>
<div class="t" style="left:937.4px;top:411.6px;margin-left:0.9px">aged-out</div>
<svg class="ic" style="top:432.1px" width="14" height="14" viewBox="0 0 14 14"><rect x="1.5" y="1.6" width="6.3" height="7.4" rx="0.8" fill="#e6f1fa" stroke="#4f9bd8" stroke-width="1.2"/><line x1="2.4" y1="3" x2="7" y2="3" stroke="#fff" stroke-width="1"/><line x1="3.3" y1="4" x2="3.3" y2="7.6" stroke="#a9cdea" stroke-width="0.9"/><line x1="5" y1="8.7" x2="2.6" y2="11" stroke="#dd9a2c" stroke-width="1.8" stroke-linecap="round"/><circle cx="8" cy="6.1" r="3" fill="#d9f3fc" stroke="#8c9cb8" stroke-width="1.1"/></svg>
<div class="t" style="left:44.4px;top:433.2px;transform:scaleX(0.895)">04/28 06:19:38</div>
<div class="t" style="left:112.4px;top:433.2px;margin-left:0.9px">end</div>
<div class="t" style="left:184.4px;top:433.2px;margin-left:0.9px">trust</div>
<div class="t" style="left:231.4px;top:433.2px;margin-left:0.9px">untrust</div>
<div class="t" style="left:278.4px;top:433.2px;transform:scaleX(0.895)">192.168.1.105</div>
<div class="t" style="left:354.4px;top:433.2px;margin-left:0.9px">m-tekinc\manadmin</div>
<div class="t" style="left:483.4px;top:433.2px;margin-left:0.9px">yes</div>
<div class="t" style="left:555.4px;top:433.2px;transform:scaleX(0.895)">172.217.215.119</div>
<div class="t" style="left:703.4px;top:433.2px;transform:scaleX(0.895)">443</div>
<div class="t" style="left:735.4px;top:433.2px;margin-left:0.9px">youtube-base</div>
<div class="t" style="left:807.4px;top:433.2px;margin-left:0.9px">allow</div>
<div class="rt" style="left:865.4px;top:432.9px;margin-left:0.6px">Permit Any Any<br>From Trust</div>
<div class="t" style="left:937.4px;top:433.2px;margin-left:0.9px">aged-out</div>
<svg class="ic" style="top:453.7px" width="14" height="14" viewBox="0 0 14 14"><rect x="1.5" y="1.6" width="6.3" height="7.4" rx="0.8" fill="#e6f1fa" stroke="#4f9bd8" stroke-width="1.2"/><line x1="2.4" y1="3" x2="7" y2="3" stroke="#fff" stroke-width="1"/><line x1="3.3" y1="4" x2="3.3" y2="7.6" stroke="#a9cdea" stroke-width="0.9"/><line x1="5" y1="8.7" x2="2.6" y2="11" stroke="#dd9a2c" stroke-width="1.8" stroke-linecap="round"/><circle cx="8" cy="6.1" r="3" fill="#d9f3fc" stroke="#8c9cb8" stroke-width="1.1"/></svg>
<div class="t" style="left:44.4px;top:454.8px;transform:scaleX(0.895)">04/28 06:19:38</div>
<div class="t" style="left:112.4px;top:454.8px;margin-left:0.9px">end</div>
<div class="t" style="left:184.4px;top:454.8px;margin-left:0.9px">trust</div>
<div class="t" style="left:231.4px;top:454.8px;margin-left:0.9px">untrust</div>
<div class="t" style="left:278.4px;top:454.8px;transform:scaleX(0.895)">192.168.1.105</div>
<div class="t" style="left:354.4px;top:454.8px;margin-left:0.9px">m-tekinc\manadmin</div>
<div class="t" style="left:483.4px;top:454.8px;margin-left:0.9px">yes</div>
<div class="t" style="left:555.4px;top:454.8px;transform:scaleX(0.895)">74.125.138.132</div>
<div class="t" style="left:703.4px;top:454.8px;transform:scaleX(0.895)">443</div>
<div class="t" style="left:735.4px;top:454.8px;margin-left:0.9px">youtube-base</div>
<div class="t" style="left:807.4px;top:454.8px;margin-left:0.9px">allow</div>
<div class="rt" style="left:865.4px;top:454.5px;margin-left:0.6px">Permit Any Any<br>From Trust</div>
<div class="t" style="left:937.4px;top:454.8px;margin-left:0.9px">aged-out</div>
</div>
<div style="position:absolute;left:9px;top:546px;width:989px;height:3px;background:#f2f3f5"></div><div id="sb"></div><div style="position:absolute;left:7px;top:311px;width:2px;height:21px;background:#aeb4b9"></div><div style="position:absolute;left:7.5px;top:319px;width:0;height:0;border-top:2.5px solid transparent;border-bottom:2.5px solid transparent;border-right:2px solid #555"></div>
</body></html>
